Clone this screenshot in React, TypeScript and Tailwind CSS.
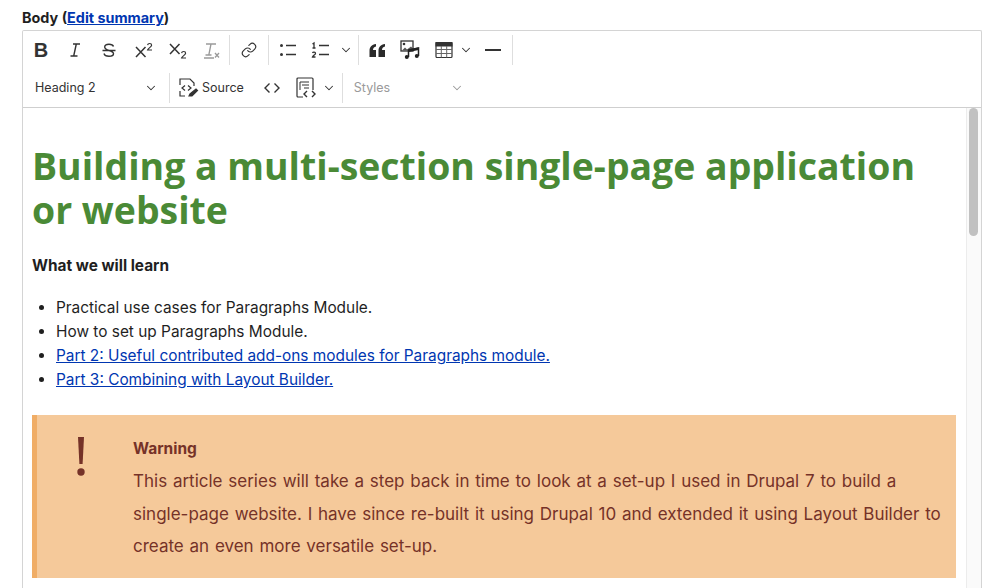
import { ChevronDown, Link } from "lucide-react";

const IconBtn = ({ className = "", children }: { className?: string; children: React.ReactNode }) => (
  <div className={`flex h-[38px] shrink-0 items-center justify-center ${className}`}>{children}</div>
);

const Sep = ({ className = "" }: { className?: string }) => <div className={`h-[30px] w-px shrink-0 bg-[#dedede] ${className}`} />;

const Chevron = ({ muted }: { muted?: boolean }) => (
  <ChevronDown size={14} strokeWidth={1.8} className={muted ? "text-[#9a9a9a]" : "text-[#333]"} />
);

const Svg = ({ children }: { children: React.ReactNode }) => (
  <svg width={20} height={20} viewBox="0 0 20 20" fill="none" stroke="#333" strokeWidth="1.4">
    {children}
  </svg>
);

function Toolbar() {
  return (
    <div className="border-b border-[#cfcfcf] text-[#333]">
      {/* first row */}
      <div className="flex h-[38px] items-center">
        <IconBtn className="w-[36px]">
          <span className="font-['Liberation_Sans',sans-serif] text-[20px] font-bold leading-none">B</span>
        </IconBtn>
        <IconBtn className="ml-[1px] w-[30px]">
          <Svg>
            <path d="M8 4h7M5.500 16h7M11.300 4 8.700 16" />
          </Svg>
        </IconBtn>
        <IconBtn className="w-[38px]">
          <Svg>
            <path d="M3.500 10.500h13M14.500 6.500C14 5 12.500 4.200 10 4.200 7.300 4.200 5.700 5.300 5.700 7c0 1.500 1.300 2.500 4.300 3.500 3 .8 4.500 1.700 4.500 3.200 0 1.600-1.800 2.500-4.500 2.500-2.600 0-4.500-.9-5-2.700" />
          </Svg>
        </IconBtn>
        <IconBtn className="w-[32px]">
          <Svg>
            <path d="m2 7 9.500 10M11.500 7 2 17" strokeWidth="1.500" />
            <path d="M13.600 5.200c.3-2.300 4-2.300 4 0 0 1.600-3.500 3-4 4.800h4.400" strokeWidth="1.200" />
          </Svg>
        </IconBtn>
        <IconBtn className="w-[36px]">
          <Svg>
            <path d="m2 4 9.500 10M11.500 4 2 14" strokeWidth="1.500" />
            <path d="M13.600 13.200c.3-2.300 4-2.300 4 0 0 1.600-3.500 3-4 4.800h4.400" strokeWidth="1.200" />
          </Svg>
        </IconBtn>
        <IconBtn className="w-[30px]">
          <svg width="20" height="20" viewBox="0 0 20 20" fill="none" stroke="#9a9a9a" strokeWidth="1.300">
            <path d="M5 4h10M10 4 7.800 15M4.500 15h6M3 18h10" />
            <path d="m14 13 4 4.500M18 13l-4 4.500" />
          </svg>
        </IconBtn>
        <Sep className="ml-[3px]" />
        <IconBtn className="w-[38px]">
          <Link size={16} strokeWidth={1.7} />
        </IconBtn>
        <Sep />
        <IconBtn className="w-[38px]">
          <Svg>
            <circle cx="3.500" cy="5.500" r="1.500" fill="#333" stroke="none" />
            <circle cx="3.500" cy="14.500" r="1.500" fill="#333" stroke="none" />
            <path d="M8 5.500h10M8 14.500h10" strokeWidth="1.500" />
          </Svg>
        </IconBtn>
        <IconBtn className="w-[26px]">
          <Svg>
            <path d="M9 5.500h10M9 14.500h10" strokeWidth="1.500" />
            <path d="M2.500 4 4 3v5M2.500 8h3M2.500 13c.5-1.200 3-1 3 .4 0 1.200-2.600 2-3 3.600h3" strokeWidth="1.300" />
          </Svg>
        </IconBtn>
        <IconBtn className="w-[25px]">
          <Chevron />
        </IconBtn>
        <Sep />
        <IconBtn className="w-[36px]">
          <svg width="17" height="15" viewBox="0 0 17 15" fill="#2b2b2b">
            <path d="M0.500 14V8C0.500 4 2.500 1.800 7 1v2.500C5 4 4 5.300 4 7h3v7Z" />
            <path d="M9.500 14V8c0-4 2-6.200 6.500-7v2.500C14 4 13 5.300 13 7h3v7Z" />
          </svg>
        </IconBtn>
        <IconBtn className="w-[30px]">
          <svg width="20" height="20" viewBox="0 0 20 20" fill="none">
            <rect x="1" y="1" width="12" height="10" fill="#fff" stroke="#333" strokeWidth="1.300" />
            <circle cx="4" cy="4" r="1.300" fill="#333" />
            <path d="m2 10.500 3-3 2 2 4-3 2 2v2H2Z" fill="#555" />
            <path d="M8.500 17V10l10-2v8" stroke="#222" strokeWidth="1.500" />
            <path d="M8.500 10.800l10-2" stroke="#222" strokeWidth="2.500" />
            <circle cx="6.800" cy="17" r="2" fill="#222" />
            <circle cx="16.800" cy="16" r="2" fill="#222" />
          </svg>
        </IconBtn>
        <IconBtn className="ml-[4px] w-[30px]">
          <svg width="18" height="18" viewBox="0 0 18 18" fill="none" stroke="#333">
            <rect x="1" y="1.500" width="16" height="15" rx="1" strokeWidth="1.200" />
            <rect x="1" y="1.500" width="16" height="3.500" fill="#333" strokeWidth="1" />
            <path d="M1 8.500h16M1 12.500h16M6.300 5v11.500M11.700 5v11.500" strokeWidth="1" stroke="#666" />
          </svg>
        </IconBtn>
        <IconBtn className="w-[14px]">
          <Chevron />
        </IconBtn>
        <IconBtn className="w-[39px]">
          <div className="h-[2px] w-[16px] bg-[#333]" />
        </IconBtn>
        <Sep />
      </div>
      {/* second row */}
      <div className="flex h-[38px] items-center">
        <div className="flex h-[38px] w-[146px] shrink-0 items-center justify-between pl-[12px] pr-[11px] text-[12.5px]">
          <span>Heading 2</span>
          <Chevron />
        </div>
        <Sep />
        <IconBtn className="ml-[8px]">
          <svg width="22" height="22" viewBox="0 0 22 22" fill="none" stroke="#333" strokeWidth="1.200">
            <path d="M2 8V2h10l4 4v3M2 14v5h5" />
            <path d="M7 8.500 4 11l3 2.500M10 8.500l3 2.500-3 2.500" />
            <path d="m11 19 1-2 6-5 1.500 1.500-5.500 5.500Z" fill="#333" />
          </svg>
        </IconBtn>
        <span className="ml-[2px] text-[12.5px]">Source</span>
        <IconBtn className="ml-[20px]">
          <svg width="16" height="16" viewBox="0 0 16 16" fill="none" stroke="#333" strokeWidth="1.400">
            <path d="M5.500 3.500 1 8l4.500 4.500M10.500 3.500 15 8l-4.500 4.500" />
          </svg>
        </IconBtn>
        <IconBtn className="ml-[15px]">
          <svg width="22" height="22" viewBox="0 0 22 22" fill="none" stroke="#333" strokeWidth="1.200">
            <path d="M8 20H3a1 1 0 0 1-1-1V2a1 1 0 0 1 1-1h14a1 1 0 0 1 1 1v11" />
            <path d="M5 5h9M7 8h7M9 11h5M5 5v8" strokeWidth="1" />
            <path d="m12 14-3 3 3 3M17 14l3 3-3 3" strokeWidth="1.400" />
          </svg>
        </IconBtn>
        <IconBtn className="ml-[4px] w-[16px]">
          <Chevron />
        </IconBtn>
        <Sep className="ml-[5px]" />
        <div className="flex h-[38px] w-[128px] shrink-0 items-center justify-between pl-[11px] pr-[7px] text-[12.5px] text-[#9a9a9a]">
          <span>Styles</span>
          <Chevron muted />
        </div>
      </div>
    </div>
  );
}

export default function App() {
  return (
    <div className="h-[588px] overflow-hidden bg-white px-[22px] pt-[9px] font-['Inter',sans-serif] text-[#1f1f1f]">
      <div className="mb-[3px] h-[18px] text-[14.4px] font-bold leading-[18px]">
        Body (<a className="text-[#0036b1] underline">Edit summary</a>)
      </div>
      <div className="w-[960px] rounded-t-[2px] border border-b-0 border-[#d4d4d4]">
        <Toolbar />
        <div className="flex h-[480px]">
          <div className="min-w-0 flex-1 pl-[9px] pr-[10px]">
            <h1 className="mt-[36px] font-['Open_Sans',sans-serif] text-[37.4px] font-bold leading-[44px] text-[#4a8a36]">
              Building a multi-section single-page application or website
            </h1>
            <p className="mt-[22px] text-[15.4px] font-bold leading-[24px]">What we will learn</p>
            <ul className="mt-[18px] list-disc pl-[24px] text-[15.4px] leading-[24px]">
              <li>Practical use cases for Paragraphs Module.</li>
              <li>How to set up Paragraphs Module.</li>
              <li>
                <a className="text-[#0036b1] underline">Part 2: Useful contributed add-ons modules for Paragraphs module.</a>
              </li>
              <li>
                <a className="text-[#0036b1] underline">Part 3: Combining with Layout Builder.</a>
              </li>
            </ul>
            <div className="mt-[23px] flex h-[163px] w-[924px] border-l-[5px] border-[#f0ad66] bg-[#f5c99a] text-[#753228]">
              <div className="w-[96px] shrink-0 pl-[38px] pt-[21px]">
                <svg width="12" height="42" viewBox="0 0 12 42" fill="#753228">
                  <path d="M3 1h6L7.600 28H4.400Z" />
                  <circle cx="6" cy="36" r="3.700" />
                </svg>
              </div>
              <div className="pr-[10px] pt-[22px]">
                <p className="text-[15.500px] font-bold leading-[24px]">Warning</p>
                <p className="mt-[4px] text-[17px] leading-[32.500px] [word-spacing:1px]">
                  This article series will take a step back in time to look at a set-up I used in Drupal 7 to build a single-page website. I have since re-built it using Drupal 10 and extended it using Layout Builder to create an even more versatile set-up.
                </p>
              </div>
            </div>
          </div>
          <div className="w-[15px] shrink-0 border-l border-[#ececec] bg-[#fafafa] pl-[2px]">
            <div className="h-[128px] w-[9px] rounded-full bg-[#c1c1c1]" />
          </div>
        </div>
      </div>
    </div>
  );
}
